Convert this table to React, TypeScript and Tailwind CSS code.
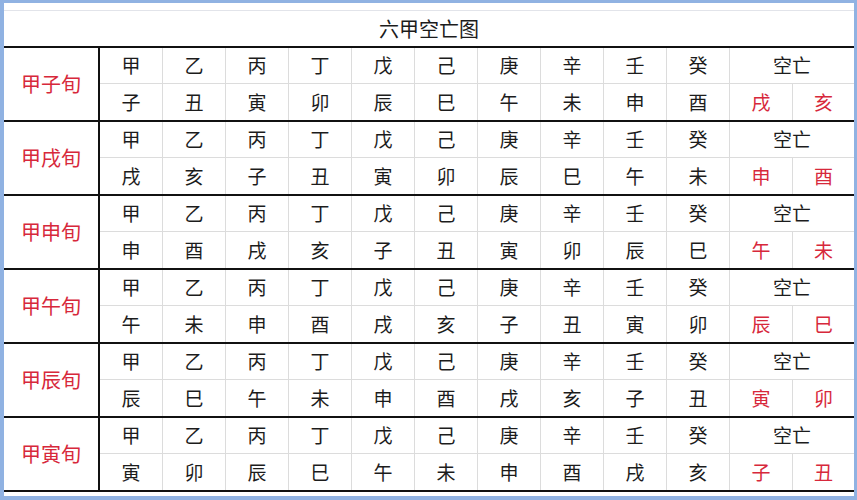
const stems = ["甲", "乙", "丙", "丁", "戊", "己", "庚", "辛", "壬", "癸"];

const groups = [
  { name: "甲子旬", branches: ["子", "丑", "寅", "卯", "辰", "巳", "午", "未", "申", "酉"], empty: ["戌", "亥"] },
  { name: "甲戌旬", branches: ["戌", "亥", "子", "丑", "寅", "卯", "辰", "巳", "午", "未"], empty: ["申", "酉"] },
  { name: "甲申旬", branches: ["申", "酉", "戌", "亥", "子", "丑", "寅", "卯", "辰", "巳"], empty: ["午", "未"] },
  { name: "甲午旬", branches: ["午", "未", "申", "酉", "戌", "亥", "子", "丑", "寅", "卯"], empty: ["辰", "巳"] },
  { name: "甲辰旬", branches: ["辰", "巳", "午", "未", "申", "酉", "戌", "亥", "子", "丑"], empty: ["寅", "卯"] },
  { name: "甲寅旬", branches: ["寅", "卯", "辰", "巳", "午", "未", "申", "酉", "戌", "亥"], empty: ["子", "丑"] },
];

const cell = "flex items-center justify-center border-r border-[#dcdcdc]";

function Group({ name, branches, empty }: { name: string; branches: string[]; empty: string[] }) {
  return (
    <div className="flex h-[74px] border-b-2 border-[#111]">
      <div className="w-[96px] flex-none flex items-center justify-center border-r-2 border-[#111] text-[20px] text-[#d7283b]">
        {name}
      </div>
      <div className="flex-1 grid grid-cols-[repeat(10,63px)_63px_1fr] grid-rows-2">
        {stems.map((s) => (
          <div key={s} className={`${cell} border-b`}>
            {s}
          </div>
        ))}
        <div className="col-span-2 flex items-center justify-center border-b border-[#dcdcdc]">空亡</div>
        {branches.map((b, i) => (
          <div key={i} className={cell}>
            {b}
          </div>
        ))}
        <div className={`${cell} text-[#d7283b]`}>{empty[0]}</div>
        <div className="flex items-center justify-center text-[#d7283b]">{empty[1]}</div>
      </div>
    </div>
  );
}

export default function App() {
  return (
    <div className="w-[857px] h-[500px] bg-[#90b2e2] pl-[4px] pr-[3px] pt-[3px] pb-[4px] font-['Noto_Sans_CJK_SC',sans-serif]">
      <div className="h-full bg-white flex flex-col text-[19px] text-[#1c1c1c]">
        <div className="mt-[7px] h-[36px] border-t border-[#e2e4ea] flex items-center justify-center text-[20px]">
          六甲空亡图
        </div>
        <div className="border-t-2 border-[#111]">
          {groups.map((g) => (
            <Group key={g.name} {...g} />
          ))}
        </div>
      </div>
    </div>
  );
}
